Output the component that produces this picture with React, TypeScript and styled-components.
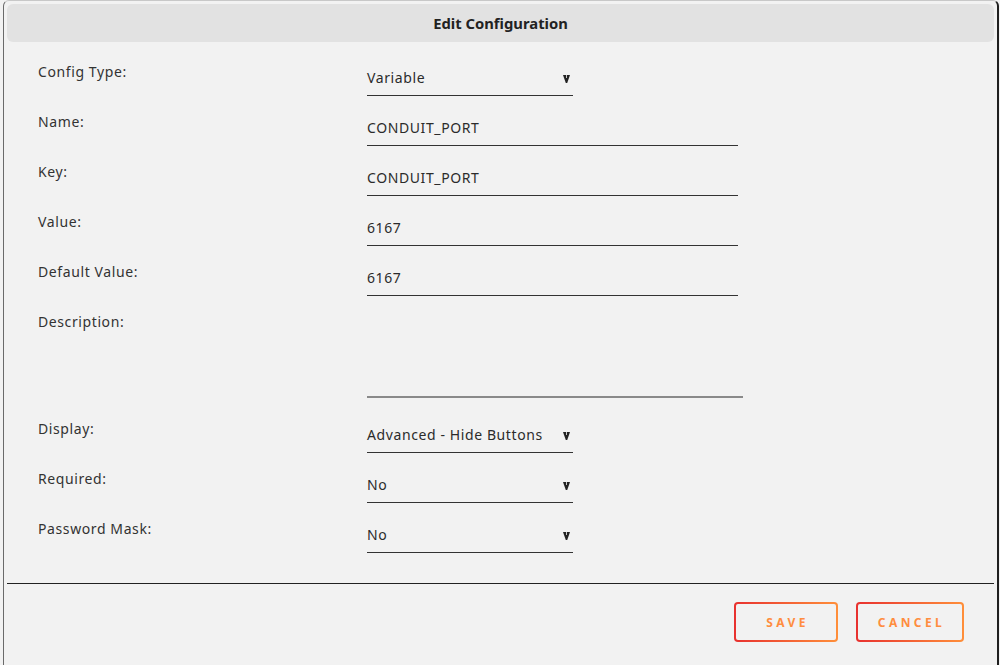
import { FC } from "react";
import styled, { createGlobalStyle } from "styled-components";

const GlobalStyle = createGlobalStyle`
  html, body {
    margin: 0;
    padding: 0;
    overflow: hidden;
    background: #f2f2f2;
  }
  body {
    font-family: "Noto Sans", "Open Sans", sans-serif;
    color: #333;
  }
`;

const Dialog = styled.div`
  margin: 0 1px 0 3px;
  height: 700px;
  border-left: 1px solid #6a6a6a;
  border-right: 2px solid #1f1f1f;
  border-top: 1px solid #c8c8c8;
  border-radius: 6px 6px 0 0;
  background: #f2f2f2;
  box-sizing: border-box;
`;

const Header = styled.div`
  margin: 3px 3px 0 3px;
  height: 38px;
  border-radius: 6px;
  background: #e2e2e2;
  display: flex;
  align-items: center;
  justify-content: center;
  font-size: 14.8px;
  font-weight: 700;
  color: #222;
`;

const Form = styled.div`
  padding: 21px 0 0 34px;
  display: flex;
  flex-direction: column;
`;

const Row = styled.div<{ $tall?: boolean }>`
  display: grid;
  grid-template-columns: 329px 1fr;
  height: ${(p) => (p.$tall ? "107px" : "50px")};
`;

const Label = styled.div`
  font-size: 14px;
  letter-spacing: 0.6px;
  line-height: 18px;
  color: #333;
`;

const Field = styled.div<{ $width: number }>`
  width: ${(p) => p.$width}px;
  margin-top: 6px;
  height: 27px;
  box-sizing: border-box;
  padding-bottom: 9px;
  border-bottom: 1px solid #333;
  display: flex;
  align-items: center;
  justify-content: space-between;
  font-size: 14px;
  letter-spacing: 0.6px;
  line-height: 18px;
  color: #2b2b2b;
`;

const TextArea = styled.div`
  width: 376px;
  height: 79px;
  margin-top: 6px;
  box-sizing: border-box;
  border-bottom: 2px solid #8a8a8a;
`;

const Arrow = styled.svg`
  width: 7px;
  height: 8px;
  margin-right: 3px;
  margin-top: 2px;
  flex: none;
`;

const Divider = styled.div`
  margin: 13px 3px 0 3px;
  height: 1px;
  background: #222;
`;

const Footer = styled.div`
  display: flex;
  justify-content: flex-end;
  gap: 18px;
  padding: 18px 33px 0 0;
`;

const Button = styled.button<{ $width: number }>`
  width: ${(p) => p.$width}px;
  height: 40px;
  border: 2px solid transparent;
  border-radius: 4px;
  background: linear-gradient(#f2f2f2, #f2f2f2) padding-box,
    linear-gradient(90deg, #e8312f, #ff8f3a) border-box;
  font-family: "Noto Sans", sans-serif;
  font-size: 12px;
  font-weight: 700;
  letter-spacing: 3.4px;
  padding: 0 0 0 3px;
  color: #ff8d3f;
  cursor: pointer;
`;

const DropArrow: FC = () => (
  <Arrow viewBox="0 0 7 8">
    <path d="M0 0 L7 0 L4.2 8 L2.8 8 Z" fill="#222" />
    <path d="M3.5 0 L3.5 3" stroke="#f2f2f2" strokeWidth="0.8" />
  </Arrow>
);

interface InputRowProps {
  label: string;
  value: string;
  select?: boolean;
}

const InputRow: FC<InputRowProps> = ({ label, value, select }) => (
  <Row>
    <Label>{label}</Label>
    <Field $width={select ? 206 : 371}>
      <span>{value}</span>
      {select && <DropArrow />}
    </Field>
  </Row>
);

const App: FC = () => {
  return (
    <>
      <GlobalStyle />
      <Dialog>
        <Header>Edit Configuration</Header>
        <Form>
          <InputRow label="Config Type:" value="Variable" select />
          <InputRow label="Name:" value="CONDUIT_PORT" />
          <InputRow label="Key:" value="CONDUIT_PORT" />
          <InputRow label="Value:" value="6167" />
          <InputRow label="Default Value:" value="6167" />
          <Row $tall>
            <Label>Description:</Label>
            <TextArea />
          </Row>
          <InputRow label="Display:" value="Advanced - Hide Buttons" select />
          <InputRow label="Required:" value="No" select />
          <InputRow label="Password Mask:" value="No" select />
        </Form>
        <Divider />
        <Footer>
          <Button $width={104}>SAVE</Button>
          <Button $width={108}>CANCEL</Button>
        </Footer>
      </Dialog>
    </>
  );
};

export default App;
